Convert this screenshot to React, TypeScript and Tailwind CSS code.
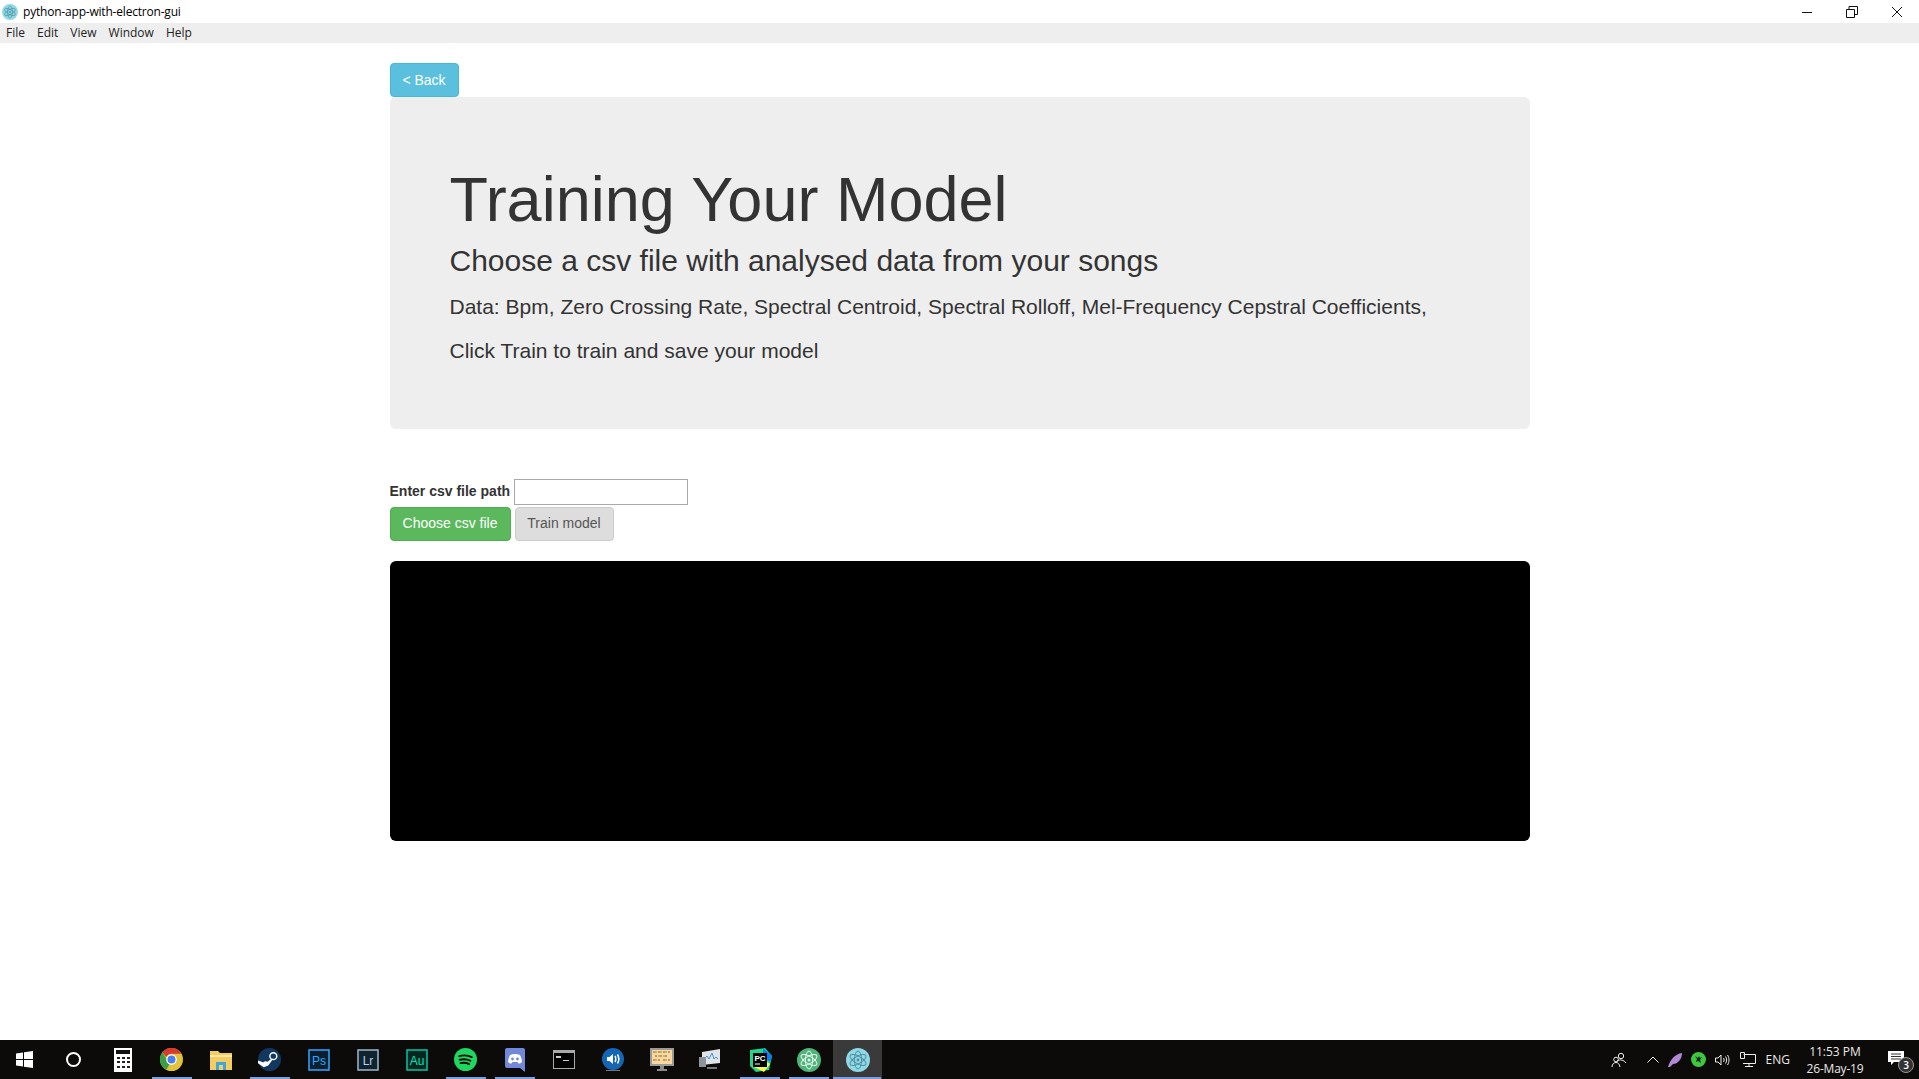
import type { ReactNode } from "react";

const menuItems = ["File", "Edit", "View", "Window", "Help"];

const ElectronGlyph = ({ size, stroke }: { size: number; stroke: string }) => (
  <svg width={size} height={size} viewBox="0 0 24 24" fill="none">
    <circle cx="12" cy="12" r="12" fill="#8fd8e6" />
    <g stroke={stroke} strokeWidth="1" fill="none">
      <ellipse cx="12" cy="12" rx="9" ry="3.6" transform="rotate(30 12 12)" />
      <ellipse cx="12" cy="12" rx="9" ry="3.6" transform="rotate(90 12 12)" />
      <ellipse cx="12" cy="12" rx="9" ry="3.6" transform="rotate(150 12 12)" />
    </g>
    <circle cx="12" cy="12" r="1.4" fill={stroke} />
  </svg>
);

const TitleBar = () => (
  <div className="flex h-[23px] items-center bg-white pl-[2px] font-['Open_Sans',sans-serif] text-[12px] text-black">
    <ElectronGlyph size={16} stroke="#4f8f9f" />
    <span className="ml-[5px] tracking-[-0.2px]">python-app-with-electron-gui</span>
    <div className="ml-auto flex h-full items-center pr-[16px]">
      <svg width="12" height="12" viewBox="0 0 12 12" className="mr-[33px]">
        <path d="M1 6.5h10" stroke="#111" />
      </svg>
      <svg width="12" height="12" viewBox="0 0 12 12" className="mr-[33px]">
        <path d="M.5 3.5h8v8h-8zM3 3.5V.5h8.5v8H8.5" fill="none" stroke="#111" />
      </svg>
      <svg width="12" height="12" viewBox="0 0 12 12">
        <path d="M1 1l10 10M11 1L1 11" stroke="#111" />
      </svg>
    </div>
  </div>
);

const MenuBar = () => (
  <div className="flex h-[20px] items-center gap-[12px] bg-[#eeeeee] pl-[6px] font-['Open_Sans',sans-serif] text-[12px] text-[#222]">
    {menuItems.map((m) => (
      <span key={m}>{m}</span>
    ))}
  </div>
);

const TaskIcon = ({ children, running, active }: { children: ReactNode; running?: boolean; active?: boolean }) => (
  <div className={`relative flex h-full w-[49px] shrink-0 items-center justify-center ${active ? "bg-[#3a3a3a]" : ""}`}>
    {children}
    {running && (
      <div className={`absolute bottom-0 h-[2px] bg-[#7b9fe0] ${active ? "left-0 right-[1px]" : "left-[5px] right-[4px]"}`} />
    )}
  </div>
);

const AdobeIcon = ({ label, border, bg, color }: { label: string; border: string; bg: string; color: string }) => (
  <svg width="22" height="22" viewBox="0 0 22 22">
    <rect x="1" y="1" width="20" height="20" fill={bg} stroke={border} strokeWidth="1.5" />
    <text x="11" y="15.5" textAnchor="middle" fontSize="12" fontFamily="Liberation Sans" fill={color}>
      {label}
    </text>
  </svg>
);

const Taskbar = () => (
  <div className="mt-auto flex h-[39px] items-center bg-[#0d0b09] text-white">
    <TaskIcon>
      <svg width="17" height="17" viewBox="0 0 17 17" fill="#fff">
        <path d="M0 2.5l7-1v6.500H0zM8 1.300L17 0v8H8zM0 9h7v6.500l-7-1zM8 9h9v8l-9-1.300z" />
      </svg>
    </TaskIcon>
    <TaskIcon>
      <div className="h-[15px] w-[15px] rounded-full border-[2px] border-white" />
    </TaskIcon>
    <TaskIcon>
      <svg width="18" height="24" viewBox="0 0 18 24">
        <rect width="18" height="24" fill="#fff" />
        <rect x="2" y="2" width="14" height="4" fill="#111" />
        <path d="M3 9h3v2H3zM8 9h3v2H8zM13 9h3v2h-3zM3 13h3v2H3zM8 13h3v2H8zM13 13h3v2h-3zM3 18h3v2H3zM8 18h3v2H8zM13 18h3v2h-3z" fill="#222" />
      </svg>
    </TaskIcon>
    <TaskIcon running>
      <svg width="23" height="23" viewBox="0 0 24 24">
        <circle cx="12" cy="12" r="12" fill="#e0c33a" />
        <path d="M12 0a12 12 0 0 1 10.400 6H12a6 6 0 0 0-5.500 3.500L2.600 4.500A12 12 0 0 1 12 0z" fill="#d8382e" />
        <path d="M2.600 4.500L7 12a5 5 0 0 0 3 5l-3.500 5.600A12 12 0 0 1 2.600 4.500z" fill="#3a9e46" />
        <circle cx="12" cy="12" r="5.500" fill="#fff" />
        <circle cx="12" cy="12" r="4.200" fill="#4a80e8" />
      </svg>
    </TaskIcon>
    <TaskIcon>
      <svg width="22" height="20" viewBox="0 0 22 20">
        <path d="M0 1h8l2 2h12v17H0z" fill="#f3cc62" />
        <path d="M0 5h22v2H0z" fill="#fbe7a6" />
        <rect x="6" y="12" width="10" height="8" fill="#3ba7dc" />
        <rect x="9" y="15" width="4" height="5" fill="#f3cc62" />
      </svg>
    </TaskIcon>
    <TaskIcon running>
      <svg width="23" height="23" viewBox="0 0 24 24">
        <circle cx="12" cy="12" r="12" fill="#12385f" />
        <circle cx="16" cy="8.500" r="3.600" fill="none" stroke="#fff" strokeWidth="1.500" />
        <circle cx="8" cy="16.500" r="2.600" fill="#fff" />
        <path d="M0 13l8 3 5-4 3-1-5 7-5 2-6-4z" fill="#fff" />
      </svg>
    </TaskIcon>
    <TaskIcon>
      <AdobeIcon label="Ps" border="#31a8ff" bg="#0a1f30" color="#31a8ff" />
    </TaskIcon>
    <TaskIcon>
      <AdobeIcon label="Lr" border="#9db8cc" bg="#10242f" color="#b4d3e6" />
    </TaskIcon>
    <TaskIcon>
      <AdobeIcon label="Au" border="#00c8a6" bg="#00261f" color="#00e4bb" />
    </TaskIcon>
    <TaskIcon running>
      <svg width="23" height="23" viewBox="0 0 24 24">
        <circle cx="12" cy="12" r="12" fill="#1ed760" />
        <path d="M5.500 8.500c4.500-1.300 9-1 13 1M6 12.300c3.800-1 7.500-.8 11 1M6.800 15.800c3-.7 6-.6 9 1" fill="none" stroke="#0d0b09" strokeWidth="2" strokeLinecap="round" />
      </svg>
    </TaskIcon>
    <TaskIcon running>
      <svg width="20" height="24" viewBox="0 0 20 24">
        <path d="M2 0h16a2 2 0 0 1 2 2v22l-5-4H2a2 2 0 0 1-2-2V2a2 2 0 0 1 2-2z" fill="#7289da" />
        <path d="M5 7c3-1.500 7-1.500 10 0 1 2 2 5 2 7-1 1-2 1.500-3.500 1.500l-1-1.500h-5l-1 1.500C5 15.500 4 15 3 14c0-2 1-5 2-7z" fill="#fff" />
        <circle cx="7.500" cy="11" r="1.400" fill="#7289da" />
        <circle cx="12.500" cy="11" r="1.400" fill="#7289da" />
      </svg>
    </TaskIcon>
    <TaskIcon>
      <svg width="22" height="19" viewBox="0 0 22 19">
        <rect width="22" height="19" fill="#aaa" />
        <rect x="1" y="3" width="20" height="15" fill="#000" />
        <path d="M3 6h5v2H3zM10 10h6v1h-6z" fill="#ccc" />
      </svg>
    </TaskIcon>
    <TaskIcon>
      <svg width="22" height="24" viewBox="0 0 22 24">
        <circle cx="11" cy="11" r="11" fill="#1565b5" />
        <path d="M5 9h2.500L11 6v10l-3.500-3H5z" fill="#fff" />
        <path d="M13 8c1 1.500 1 4.500 0 6M15.500 6.500c1.500 2.500 1.500 6.500 0 9" stroke="#fff" fill="none" strokeWidth="1.500" />
        <rect x="4" y="22" width="14" height="1" fill="#777" />
      </svg>
    </TaskIcon>
    <TaskIcon>
      <svg width="24" height="24" viewBox="0 0 24 24">
        <rect width="24" height="18" fill="#9a9a9a" />
        <rect x="2" y="2" width="20" height="14" fill="#f4d9a0" />
        <path d="M3 3h2v2H3zM8 3h2v2H8zM13 3h2v2h-2zM18 3h2v2h-2zM5 7h2v2H5zM10 7h2v2h-2zM15 7h2v2h-2zM3 11h2v2H3zM8 11h2v2H8zM13 11h2v2h-2zM18 11h2v2h-2z" fill="#e9865b" />
        <path d="M5 3h2v2H5zM10 3h2v2h-2zM15 3h2v2h-2zM8 7h2v2H8zM13 7h2v2h-2zM5 11h2v2H5zM15 11h2v2h-2z" fill="#9cc77a" />
        <path d="M10 18h4v3h3v2H7v-2h3z" fill="#8a8a8a" />
      </svg>
    </TaskIcon>
    <TaskIcon>
      <svg width="24" height="22" viewBox="0 0 24 22">
        <path d="M3 3l18-3v14L3 16z" fill="#dfe4e8" />
        <path d="M5 10l3-3 2 3 3-6 2 6 2-2 2 2" stroke="#4a90d9" fill="none" />
        <path d="M0 8h7v10H0z" fill="#8f9498" />
        <path d="M8 18h10v2H8z" fill="#777" />
      </svg>
    </TaskIcon>
    <TaskIcon running>
      <svg width="24" height="24" viewBox="0 0 24 24">
        <path d="M2 2l15-2 7 8-3 14-13 2-6-6z" fill="#21d789" />
        <path d="M15 0l9 8-2 6-7-6z" fill="#087cfa" />
        <path d="M4 18l12 6 6-8-6-4z" fill="#fcf84a" />
        <rect x="5" y="5" width="14" height="14" fill="#000" />
        <text x="12" y="13" textAnchor="middle" fontSize="8" fontWeight="700" fontFamily="Liberation Sans" fill="#fff">PC</text>
        <rect x="7" y="15.500" width="5" height="1" fill="#fff" />
      </svg>
    </TaskIcon>
    <TaskIcon running>
      <svg width="24" height="24" viewBox="0 0 24 24">
        <circle cx="12" cy="12" r="12" fill="#4fb47a" />
        <g stroke="#eaf7ef" strokeWidth="1" fill="none">
          <ellipse cx="12" cy="12" rx="9" ry="3.600" transform="rotate(30 12 12)" />
          <ellipse cx="12" cy="12" rx="9" ry="3.600" transform="rotate(90 12 12)" />
          <ellipse cx="12" cy="12" rx="9" ry="3.600" transform="rotate(150 12 12)" />
        </g>
        <circle cx="12" cy="12" r="1.500" fill="#eaf7ef" />
      </svg>
    </TaskIcon>
    <TaskIcon running active>
      <ElectronGlyph size={24} stroke="#4f8f9f" />
    </TaskIcon>

    <div className="ml-auto flex h-full items-center text-[#e8e8e8]">
      <svg width="16" height="16" viewBox="0 0 16 16" fill="none" stroke="#eee" className="mr-[20px]">
        <circle cx="10" cy="4" r="2.700" />
        <path d="M6 9c3-2 7-1 9 2" />
        <circle cx="5" cy="7.500" r="2.300" />
        <path d="M1 15c0-3 2-4.500 4-4.500S8.500 12 9 15" />
      </svg>
      <svg width="12" height="7" viewBox="0 0 12 7" fill="none" stroke="#eee" className="mr-[8px]">
        <path d="M.5 6.500l5.500-5.500 5.500 5.500" />
      </svg>
      <svg width="16" height="16" viewBox="0 0 16 16" className="mr-[8px]">
        <path d="M1 15C3 8 8 2 15 1c0 6-4 11-9 11l-3 3z" fill="#b189d8" />
      </svg>
      <div className="mr-[9px] flex h-[15px] w-[15px] items-center justify-center rounded-full bg-[#3fc83c]">
        <svg width="9" height="9" viewBox="0 0 9 9">
          <path d="M1 1l3 2 1-2 1 2 2-1-2 3 1 3-3-2-2 1 1-3z" fill="#123" />
        </svg>
      </div>
      <svg width="16" height="14" viewBox="0 0 16 14" fill="none" stroke="#eee" className="mr-[9px]">
        <path d="M.5 5h2.500l3-3v10l-3-3H.5zM8.500 5c.8 1 .8 3 0 4M10.500 3.500c1.500 2 1.500 5 0 7M12.500 2c2 3 2 7 0 10" />
      </svg>
      <svg width="16" height="15" viewBox="0 0 16 15" fill="none" stroke="#eee" className="mr-[10px]">
        <path d="M3.500 2.500h12v9H3M.5.500h4v6h-4zM9 11.500v3M5 14.500h8" />
      </svg>
      <span className="mr-[12px] font-['Open_Sans',sans-serif] text-[12px]">ENG</span>
      <div className="mr-[16px] flex w-[66px] flex-col items-center font-['Open_Sans',sans-serif] text-[12px] leading-[17px]">
        <span>11:53 PM</span>
        <span className="tracking-[-0.2px]">26-May-19</span>
      </div>
      <div className="relative mr-[5px] flex h-full w-[30px] items-center">
        <svg width="16" height="15" viewBox="0 0 16 15" className="ml-[4px] mb-[2px]">
          <path d="M0 0h16v11H6l-3 3v-3H0z" fill="#fff" />
          <path d="M3 3h10M3 5.500h10M3 8h10" stroke="#333" />
        </svg>
        <div className="absolute right-[0px] bottom-[6px] flex h-[16px] w-[16px] items-center justify-center rounded-full border border-[#999] bg-[#333] font-['Open_Sans',sans-serif] text-[10px] font-semibold text-white">
          3
        </div>
      </div>
    </div>
  </div>
);

export default function App() {
  return (
    <div className="flex h-screen flex-col overflow-hidden bg-white font-['Liberation_Sans',sans-serif] text-[#333]">
      <TitleBar />
      <MenuBar />

      <div className="mx-auto flex w-[1140px] flex-col pt-[20px]">
        <button className="h-[34px] w-[69px] rounded-[4px] border border-[#46b8da] bg-[#5bc0de] text-[14px] text-white">
          &lt; Back
        </button>

        <div className="rounded-[6px] bg-[#eeeeee] px-[60px] pt-[48px] pb-[48px]">
          <h1 className="mt-[20px] mb-[10px] text-[63px] leading-[69px] font-normal">Training Your Model</h1>
          <h3 className="mb-[15px] text-[30px] leading-[33px] font-normal">Choose a csv file with analysed data from your songs</h3>
          <p className="mb-[15px] text-[21px] leading-[29.400px] font-light">
            Data: Bpm, Zero Crossing Rate, Spectral Centroid, Spectral Rolloff, Mel-Frequency Cepstral Coefficients,
          </p>
          <p className="mb-[15px] text-[21px] leading-[29.400px] font-light">Click Train to train and save your model</p>
        </div>

        <div className="mt-[50px] flex h-[26px] items-center">
          <label className="text-[14px] font-bold">Enter csv file path</label>
          <input className="ml-[4px] h-[26px] w-[174px] border border-[#a9a9a9] bg-white" />
        </div>
        <div className="mt-[2px] flex gap-[4px]">
          <button className="h-[34px] w-[121px] rounded-[4px] border border-[#4cae4c] bg-[#5cb85c] text-[14px] text-white">
            Choose csv file
          </button>
          <button className="h-[34px] w-[99px] rounded-[4px] border border-[#ccc] bg-[#dddddd] text-[14px] text-[#555]">
            Train model
          </button>
        </div>

        <div className="mt-[20px] h-[280px] rounded-[6px] bg-black" />
      </div>

      <Taskbar />
    </div>
  );
}
